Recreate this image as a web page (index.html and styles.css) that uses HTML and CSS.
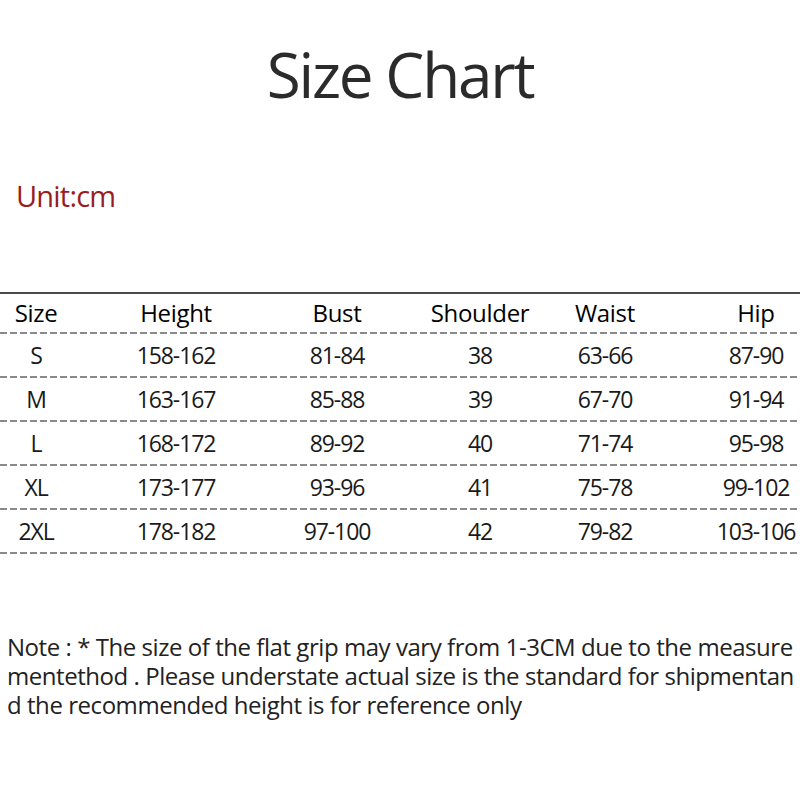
FILE: index.html
```html
<!DOCTYPE html>
<html>
<head>
<meta charset="utf-8">
<link rel="stylesheet" href="styles.css">
</head>
<body>
<div class="page">
  <h1 class="title">Size Chart</h1>
  <div class="unit">Unit:cm</div>
  <div class="table">
    <div class="row head">
      <div class="c c1">Size</div><div class="c c2">Height</div><div class="c c3">Bust</div><div class="c c4">Shoulder</div><div class="c c5">Waist</div><div class="c c6">Hip</div>
    </div>
    <div class="row">
      <div class="c c1">S</div><div class="c c2">158-162</div><div class="c c3">81-84</div><div class="c c4">38</div><div class="c c5">63-66</div><div class="c c6">87-90</div>
    </div>
    <div class="row">
      <div class="c c1">M</div><div class="c c2">163-167</div><div class="c c3">85-88</div><div class="c c4">39</div><div class="c c5">67-70</div><div class="c c6">91-94</div>
    </div>
    <div class="row">
      <div class="c c1">L</div><div class="c c2">168-172</div><div class="c c3">89-92</div><div class="c c4">40</div><div class="c c5">71-74</div><div class="c c6">95-98</div>
    </div>
    <div class="row">
      <div class="c c1">XL</div><div class="c c2">173-177</div><div class="c c3">93-96</div><div class="c c4">41</div><div class="c c5">75-78</div><div class="c c6">99-102</div>
    </div>
    <div class="row">
      <div class="c c1">2XL</div><div class="c c2">178-182</div><div class="c c3">97-100</div><div class="c c4">42</div><div class="c c5">79-82</div><div class="c c6">103-106</div>
    </div>
  </div>
  <div class="note">
    <div class="line">Note : * The size of the flat grip may vary from 1-3CM due to the measure</div>
    <div class="line">mentethod . Please understate actual size is the standard for shipmentan</div>
    <div class="line">d the recommended height is for reference only</div>
  </div>
</div>
</body>
</html>
```
FILE: styles.css
```css
html, body {
  margin: 0;
  padding: 0;
  background: #fff;
}
.page {
  width: 800px;
  height: 800px;
  overflow: hidden;
  font-family: "Open Sans", "Noto Sans", sans-serif;
  color: #1e1e1e;
}
.title {
  margin: 0;
  padding-top: 34px;
  height: 80px;
  line-height: 80px;
  text-align: center;
  font-size: 62px;
  font-weight: 500;
  letter-spacing: -2.2px;
  color: #2b2b2b;
}
.unit {
  margin-top: 62px;
  padding-left: 16px;
  font-size: 29px;
  line-height: 40px;
  letter-spacing: -0.8px;
  font-weight: 500;
  color: #9a1c22;
}
.table {
  margin-top: 76px;
  border-top: 2px solid #4a4a4a;
}
.row {
  display: grid;
  grid-template-columns: 72px 208px 114px 172px 78px 156px;
  height: 42px;
  padding-bottom: 2px;
  background-image: linear-gradient(to right, #8a8a8a 70%, transparent 70%);
  background-size: 10px 2px;
  background-repeat: repeat-x;
  background-position: 0 100%;
  align-items: center;
}
.row.head {
  height: 38px;
}
.c {
  text-align: center;
  font-size: 23px;
  letter-spacing: -1.1px;
  line-height: 30px;
  font-weight: 500;
  color: #1a1a1a;
}
.head .c {
  font-size: 24px;
  letter-spacing: -0.3px;
  color: #000;
}
.c6 {
  padding-left: 68px;
}
.note {
  margin-top: 78px;
  padding-left: 7px;
  font-size: 24px;
  line-height: 29px;
  letter-spacing: -0.45px;
  font-weight: 500;
  color: #222;
}
.line {
  white-space: nowrap;
}
```
